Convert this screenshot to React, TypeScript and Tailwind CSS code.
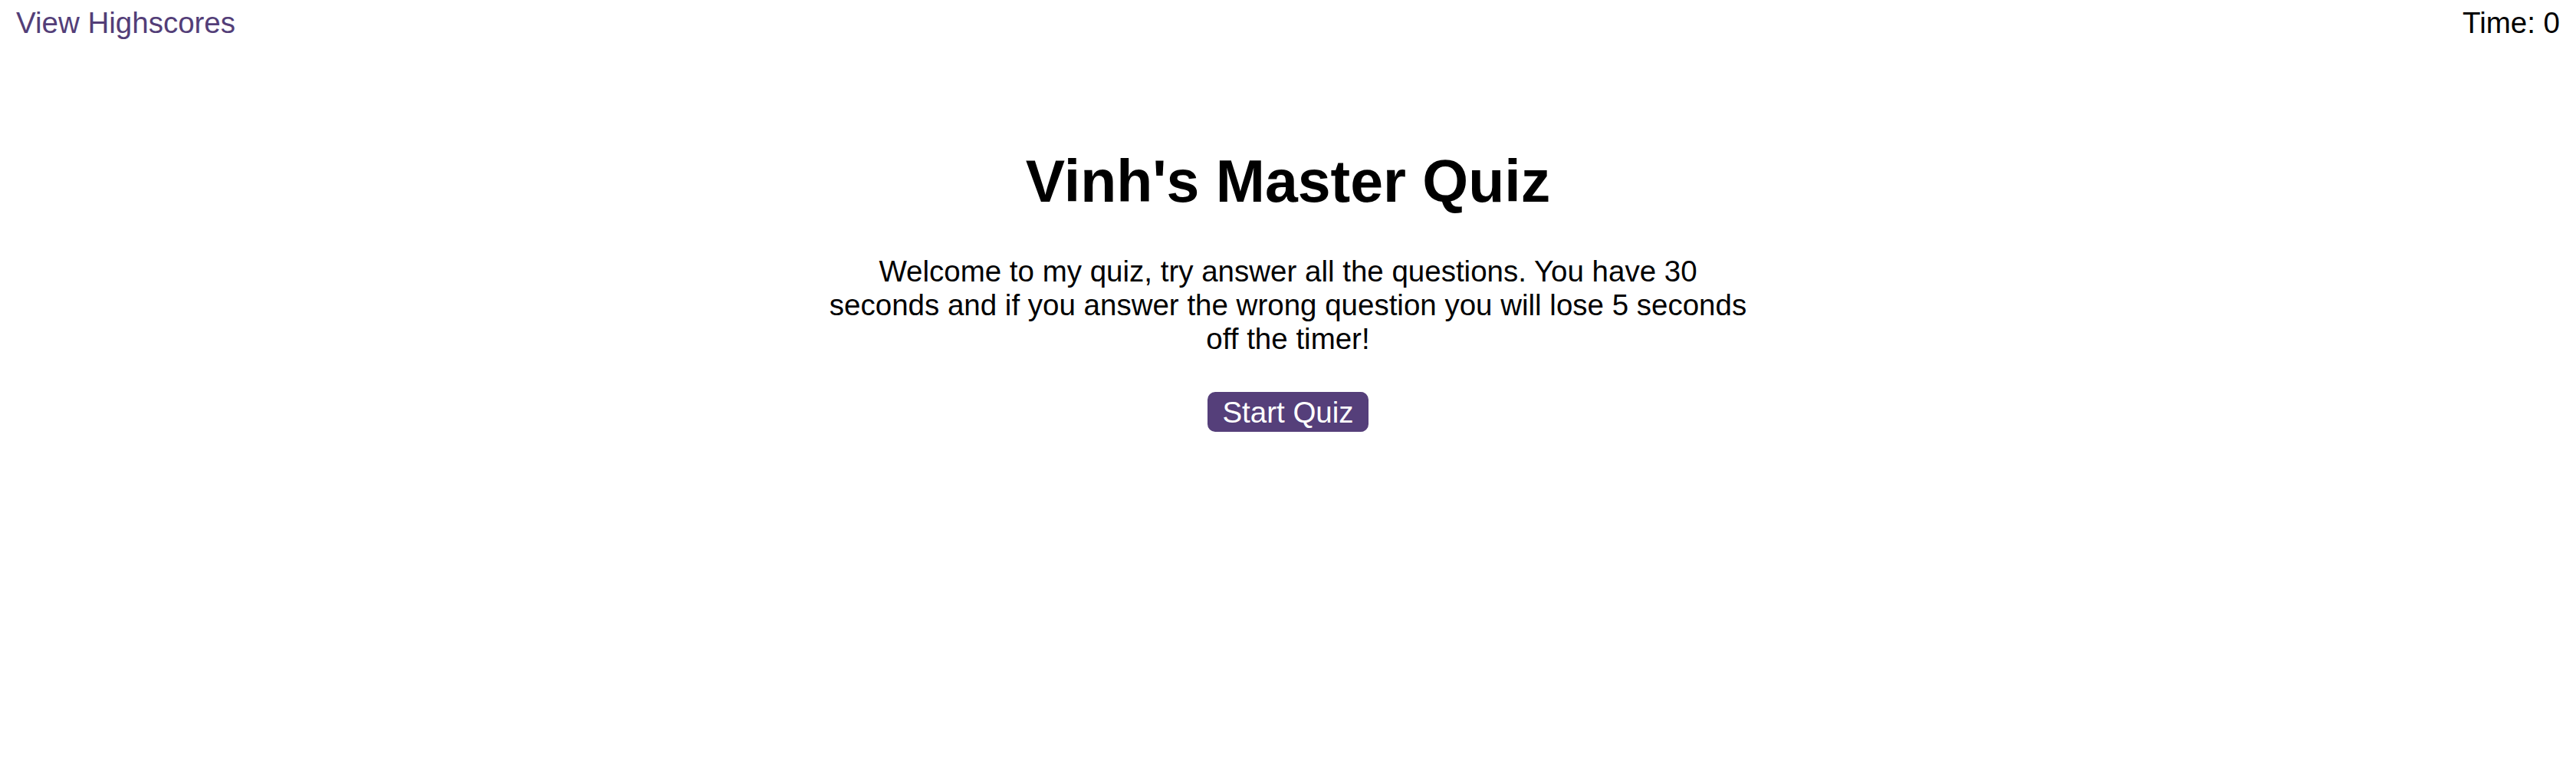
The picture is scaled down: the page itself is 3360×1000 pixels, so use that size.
import React from "react";

export default function App() {
  return (
    <div className="min-h-[1000px] bg-white text-black text-[38.5px] leading-[normal]" style={{ fontFamily: '"Liberation Sans", Arial, sans-serif' }}>
      <header className="flex justify-between px-[21px] pt-[8px] leading-[normal]">
        <a href="#" className="text-[#533e78]">View Highscores</a>
        <span>Time: 0</span>
      </header>
      <main className="flex flex-col items-center leading-[normal]">
        <h1 className="mt-[140px] text-[77px] font-bold leading-[normal]">Vinh's Master Quiz</h1>
        <p className="mt-[51px] w-[1210px] text-center leading-[normal]">
          Welcome to my quiz, try answer all the questions. You have 30 seconds and if you answer the wrong question you will lose 5 seconds off the timer!
        </p>
        <button className="mt-[47px] flex h-[52px] items-center rounded-[10px] bg-[#553f7a] px-[19px] pt-[2px] text-white leading-[normal]">
          Start Quiz
        </button>
      </main>
    </div>
  );
}
